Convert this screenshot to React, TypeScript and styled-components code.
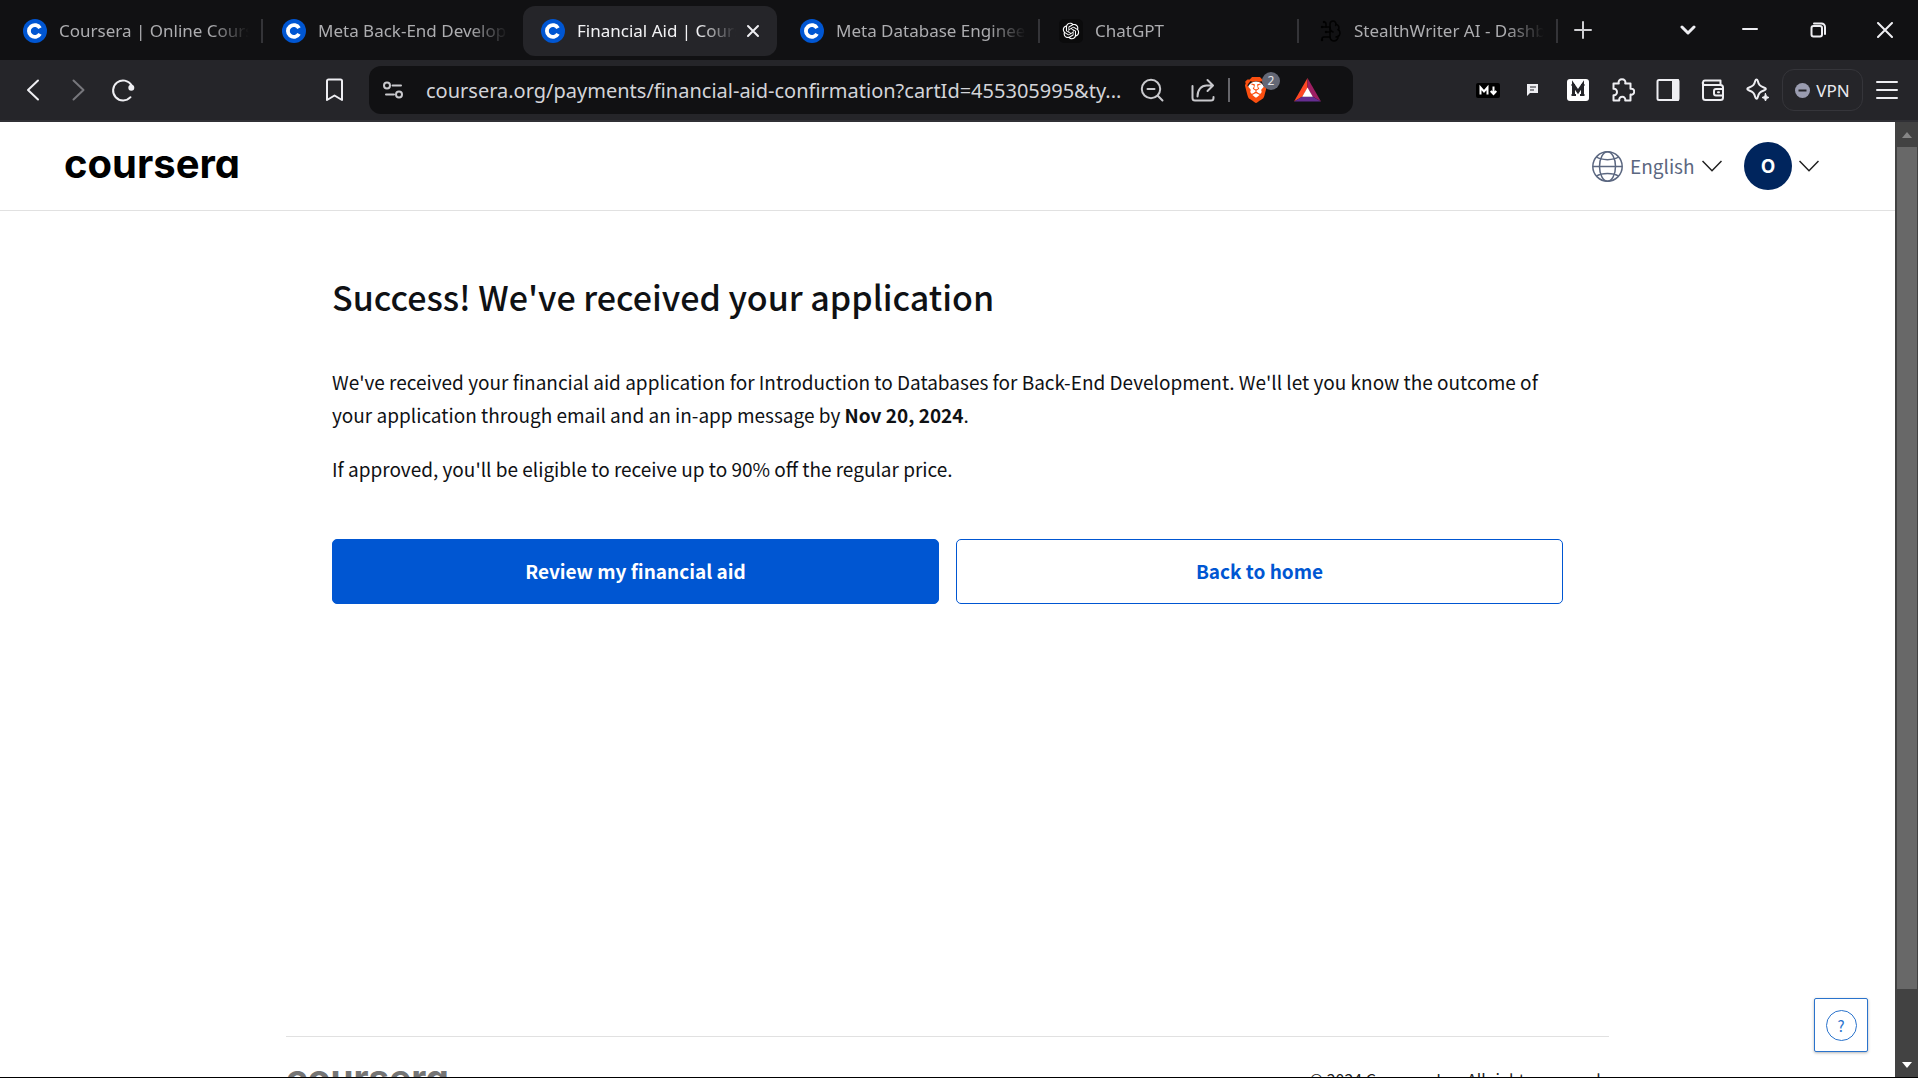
import React from "react";
import styled, { createGlobalStyle } from "styled-components";
import { BrainCircuit } from "lucide-react";
import { SiBrave } from "react-icons/si";
import { RiOpenaiFill } from "react-icons/ri";

const uiFont = `"Noto Sans", "Open Sans", sans-serif`;
const pageFont = `"Source Sans Pro", "Noto Sans CJK SC", "Noto Sans", sans-serif`;

const GlobalStyle = createGlobalStyle`
  * { box-sizing: border-box; }
  body { margin: 0; font-family: ${pageFont}; color: #0f1114; background: #fff; }
  button, input, select { font: inherit; color: inherit; margin: 0; }
  button { border: 0; padding: 0; background: none; cursor: pointer; }
  svg { display: block; flex: none; }
`;

const Window = styled.div`
  display: flex;
  flex-direction: column;
  height: 100vh;
  overflow: hidden;
  border-bottom: 1px solid #000;
`;

const TabStrip = styled.header`
  display: flex;
  align-items: center;
  height: 60px;
  flex: none;
  padding-left: 5px;
  background: #111113;
  font-family: ${uiFont};
`;

const TabItem = styled.div<{ $active?: boolean; $divider?: boolean }>`
  position: relative;
  display: flex;
  align-items: center;
  gap: 8px;
  flex: 0 1 254px;
  min-width: 0;
  height: 50px;
  margin: 2px 5px 0 0;
  padding: 0 ${(p) => (p.$active ? 15 : 10)}px 0 18px;
  border-radius: 12px;
  color: ${(p) => (p.$active ? "#f3f3f5" : "#adadb0")};
  background: ${(p) => (p.$active ? "#252529" : "transparent")};

  &::after {
    content: "";
    display: ${(p) => (p.$divider ? "block" : "none")};
    position: absolute;
    right: -4px;
    top: 13px;
    width: 2px;
    height: 24px;
    background: #343438;
  }
`;

const TabButton = styled.button`
  display: flex;
  align-items: center;
  gap: 12px;
  flex: 1;
  min-width: 0;
  height: 100%;
  text-align: left;
`;

const TabTitle = styled.span`
  flex: 1;
  min-width: 0;
  overflow: hidden;
  white-space: nowrap;
  font-size: 17px;
  line-height: 24px;
  mask-image: linear-gradient(to right, #000 calc(100% - 38px), transparent);
`;

const FlippedBrain = styled(BrainCircuit)`
  transform: scaleX(-1);
`;

const IconButton = styled.button<{ $width?: number; $color?: string }>`
  display: flex;
  align-items: center;
  justify-content: center;
  flex: none;
  width: ${(p) => p.$width ?? 45}px;
  height: 45px;
  color: ${(p) => p.$color ?? "#eeeef2"};
`;

const WindowControls = styled.div`
  display: flex;
  margin-left: auto;
`;

const Toolbar = styled.nav`
  display: flex;
  align-items: center;
  flex: none;
  height: 62px;
  padding: 0 9px 0 10px;
  background: #252529;
  border-bottom: 2px solid #303035;
  font-family: ${uiFont};
`;

const BookmarkSlot = styled.div`
  display: flex;
  justify-content: flex-end;
  width: 212px;
  margin-right: 12px;
`;

const AddressBar = styled.div`
  display: flex;
  align-items: center;
  flex: 1;
  min-width: 0;
  height: 48px;
  margin-right: 112px;
  padding: 0 21px 0 1px;
  border-radius: 12px;
  background: #111113;
`;

const AddressInput = styled.input`
  flex: 1;
  min-width: 0;
  height: 40px;
  padding: 0 0 0 11px;
  border: 0;
  outline: 0;
  background: none;
  font-size: 20px;
  color: #d3d4d9;
`;

const Separator = styled.span`
  width: 2px;
  height: 24px;
  background: #66666b;
`;

const ShieldButton = styled(IconButton)`
  position: relative;
`;

const ShieldFace = styled.span`
  display: flex;
  color: #fb4f10;
  background: radial-gradient(circle, #fff 0 8px, transparent 9px);
`;

const ShieldCount = styled.span`
  position: absolute;
  right: 2px;
  top: 4px;
  width: 18px;
  height: 18px;
  border-radius: 9px;
  background: #636775;
  color: #e4e5ea;
  font-size: 12px;
  line-height: 18px;
  text-align: center;
`;

const VpnButton = styled.button`
  display: flex;
  align-items: center;
  justify-content: center;
  gap: 6px;
  width: 81px;
  height: 42px;
  margin: 0 1px 0 2px;
  border: 1px solid #35353a;
  border-radius: 12px;
  color: #e9e9ee;
  font-size: 17px;
`;

const Viewport = styled.div`
  display: flex;
  flex: 1;
  min-height: 0;
`;

const Page = styled.div`
  position: relative;
  display: flex;
  flex-direction: column;
  flex: 1;
  min-width: 0;
  overflow: hidden;
`;

const SiteHeader = styled.header`
  display: flex;
  align-items: center;
  justify-content: space-between;
  flex: none;
  height: 89px;
  padding: 0 76px 0 64px;
  border-bottom: 1px solid #e1e1e1;
`;

const Wordmark = styled.a<{ $muted?: boolean }>`
  padding-bottom: 4px;
  font-family: Inter, sans-serif;
  font-weight: 700;
  font-feature-settings: "cv11";
  font-size: ${(p) => (p.$muted ? 37 : 40)}px;
  line-height: 48px;
  text-decoration: none;
  color: ${(p) => (p.$muted ? "#757575" : "#000")};
`;

const HeaderActions = styled.div`
  display: flex;
  align-items: center;
  gap: 22px;
`;

const LanguageLabel = styled.label`
  display: flex;
  align-items: center;
  gap: 7px;
  color: #5b6780;
`;

const LanguageSelect = styled.select`
  appearance: none;
  border: 0;
  padding: 0;
  background: none;
  font-size: 19px;
  line-height: 30px;
`;

const AccountButton = styled.button`
  display: flex;
  align-items: center;
  gap: 7px;
`;

const Avatar = styled.span`
  width: 48px;
  height: 48px;
  border-radius: 50%;
  background: #00255d;
  color: #fff;
  font-size: 19px;
  font-weight: 700;
  line-height: 46px;
  text-align: center;
`;

const Main = styled.main`
  flex: 1;
  width: 100%;
  max-width: 1231px;
  margin: 0 auto;
  padding-top: 62px;
`;

const Heading = styled.h1`
  margin: 0 0 44px;
  font-size: 34px;
  font-weight: 500;
  line-height: 48px;
`;

const Paragraph = styled.p`
  margin: 0 0 21px;
  font-size: 19px;
  line-height: 33px;
`;

const ButtonRow = styled.div`
  display: grid;
  grid-template-columns: 1fr 1fr;
  gap: 17px;
  margin-top: 54px;
`;

const ActionButton = styled.button<{ $primary?: boolean }>`
  height: 65px;
  padding-bottom: 2px;
  border: 1px solid #0056d2;
  border-radius: 5px;
  background: ${(p) => (p.$primary ? "#0056d2" : "#fff")};
  color: ${(p) => (p.$primary ? "#fff" : "#0056d2")};
  font-size: 19px;
  font-weight: 700;
`;

const SiteFooter = styled.footer`
  display: flex;
  justify-content: space-between;
  align-items: flex-start;
  flex: 0 0 41px;
  width: 100%;
  max-width: 1323px;
  margin: 0 auto;
  padding-top: 17px;
  border-top: 1px solid #e1e1e1;
  overflow: hidden;
`;

const Copyright = styled.p`
  margin: 13px 4px 0 0;
  font-size: 16px;
  line-height: 24px;
  color: #1f1f1f;
`;

const HelpButton = styled.button`
  position: absolute;
  right: 27px;
  bottom: 25px;
  display: flex;
  align-items: center;
  justify-content: center;
  width: 54px;
  height: 54px;
  border: 1px solid #2a73cc;
  border-radius: 2px;
  background: #fff;
  box-shadow: 0 1px 3px rgba(0, 0, 0, 0.3);
`;

const HelpMark = styled.span`
  width: 31px;
  height: 31px;
  border: 1px solid #2a73cc;
  border-radius: 50%;
  color: #2a73cc;
  font-size: 15px;
  line-height: 29px;
`;

const ScrollTrack = styled.div`
  display: flex;
  flex-direction: column;
  align-items: center;
  width: 23px;
  flex: none;
  background: #424242;
`;

const ScrollArrow = styled.span<{ $down?: boolean }>`
  display: flex;
  align-items: center;
  height: 25px;
  color: ${(p) => (p.$down ? "#fff" : "#868686")};
`;

const ScrollThumb = styled.span`
  width: 20px;
  flex: 842;
  background: #686868;
`;

const ScrollRest = styled.span`
  flex: 63;
`;

const CourseraIcon = () => (
  <svg width="24" height="24" viewBox="0 0 24 24" fill="none">
    <circle cx="12" cy="12" r="12" fill="#0056d2" />
    <path d="M17 9.200a5.900 5.900 0 1 0 0 5.600" stroke="#fff" strokeWidth="3.800" />
  </svg>
);

const GptIcon = () => (
  <svg width="24" height="24" viewBox="0 0 24 24">
    <rect width="24" height="24" rx="5" fill="#0b0b0c" />
    <RiOpenaiFill x="2" y="2" size={20} color="#fff" />
  </svg>
);

const Chevron = () => (
  <svg width="20" height="12" viewBox="0 0 20 12" fill="none" stroke="#1f1f1f" strokeWidth="1.5">
    <path d="M.5 1 10 10.700 19.500 1" />
  </svg>
);

type LineIconProps = { children: React.ReactNode; size?: number; width?: number };
const LineIcon = ({ children, size = 24, width = 2 }: LineIconProps) => (
  <svg width={size} height={size} viewBox={`0 0 ${size} ${size}`} fill="none" stroke="currentColor" strokeWidth={width} strokeLinecap="round" strokeLinejoin="round">
    {children}
  </svg>
);

const tabs = [
  { title: "Coursera | Online Courses", icon: <CourseraIcon />, divider: true },
  { title: "Meta Back-End Developer", icon: <CourseraIcon /> },
  { title: "Financial Aid | Coursera", icon: <CourseraIcon />, active: true },
  { title: "Meta Database Engineer", icon: <CourseraIcon />, divider: true },
  { title: "ChatGPT", icon: <GptIcon />, divider: true },
  { title: "StealthWriter AI - Dashboard", icon: <FlippedBrain size={24} color="#020202" strokeWidth={1.5} />, divider: true },
];

const BrowserTabs = () => (
  <TabStrip>
    {tabs.map((tab) => (
      <TabItem key={tab.title} $active={tab.active} $divider={tab.divider}>
        <TabButton>
          {tab.icon}
          <TabTitle>{tab.title}</TabTitle>
        </TabButton>
        {tab.active && (
          <IconButton $width={18} aria-label="Close tab">
            <LineIcon size={14}><path d="M2 2l10 10M12 2 2 12" /></LineIcon>
          </IconButton>
        )}
      </TabItem>
    ))}
    <IconButton $width={48} $color="#d0d0d3" aria-label="New tab">
      <LineIcon size={18}><path d="M9 1v16M1 9h16" /></LineIcon>
    </IconButton>
    <WindowControls>
      <IconButton $width={56} aria-label="Search tabs">
        <LineIcon size={16} width={3}><path d="M2 5l6 6 6-6" /></LineIcon>
      </IconButton>
      <IconButton $width={68} aria-label="Minimize">
        <LineIcon size={16}><path d="M1 7h14" /></LineIcon>
      </IconButton>
      <IconButton $width={68} aria-label="Restore">
        <LineIcon size={16}>
          <rect x="1.500" y="4" width="10.500" height="10.500" rx="2" />
          <path d="M4 1.500h7.500a3.500 3.500 0 0 1 3.500 3.500V12" />
        </LineIcon>
      </IconButton>
      <IconButton $width={66} aria-label="Close window">
        <LineIcon size={16}><path d="M1 1l14 14M15 1 1 15" /></LineIcon>
      </IconButton>
    </WindowControls>
  </TabStrip>
);

const BrowserToolbar = () => (
  <Toolbar>
    <IconButton aria-label="Back"><LineIcon><path d="M17 2.500 7 12l10 9.500" /></LineIcon></IconButton>
    <IconButton aria-label="Forward" $color="#77777c"><LineIcon><path d="M7.500 2.500 17.500 12l-10 9.500" /></LineIcon></IconButton>
    <IconButton aria-label="Reload">
      <LineIcon>
        <path d="M19.500 19.200A10 10 0 1 1 20.600 7.200" />
        <circle cx="20.300" cy="9.700" r="2" fill="currentColor" />
      </LineIcon>
    </IconButton>
    <BookmarkSlot>
      <IconButton aria-label="Bookmark">
        <LineIcon><path d="M4 3a1.500 1.500 0 0 1 1.500-1.500h12A1.500 1.500 0 0 1 19 3v19l-7.500-4.500L4 22z" /></LineIcon>
      </IconButton>
    </BookmarkSlot>
    <AddressBar>
      <IconButton aria-label="Site settings" $color="#c9c9cd">
        <LineIcon><circle cx="6" cy="7.500" r="3" /><path d="M11.500 7.500H20M5 16.500h8" /><circle cx="18" cy="16.500" r="3" /></LineIcon>
      </IconButton>
      <AddressInput aria-label="Address" defaultValue="coursera.org/payments/financial-aid-confirmation?cartId=455305995&ty..." />
      <IconButton aria-label="Zoom" $width={51} $color="#c9c9cd">
        <LineIcon><circle cx="11" cy="11" r="9.200" /><path d="M7.500 11h7M17.800 17.800 22.500 22.500" /></LineIcon>
      </IconButton>
      <IconButton aria-label="Share" $width={51} $color="#c9c9cd">
        <LineIcon><path d="M1.500 8v12a2.500 2.500 0 0 0 2.500 2.500h16a2.500 2.500 0 0 0 2.500-2.500v-1M6.500 18.500c0-7 4-11 9-11h6M16.500 2l5.500 5.500-5.500 5.500" /></LineIcon>
      </IconButton>
      <Separator />
      <ShieldButton $width={52} aria-label="Brave Shields">
        <ShieldFace><SiBrave size={26} /></ShieldFace>
        <ShieldCount>2</ShieldCount>
      </ShieldButton>
      <IconButton $width={50} aria-label="Rewards">
        <svg width="27" height="24" viewBox="0 0 27 24">
          <path d="M13.500 0 0 23.500l8.500-5 5-8.500z" fill="#ff4724" />
          <path d="M13.500 0 27 23.500l-8.500-5-5-8.500z" fill="#9e1f63" />
          <path d="M0 23.500h27l-8.500-5h-10z" fill="#662d91" />
          <path d="M13.500 9.500 8.200 18.700h10.600z" fill="#fff" />
        </svg>
      </IconButton>
    </AddressBar>
    <IconButton aria-label="Markdown">
      <svg width="24" height="15" viewBox="0 0 24 15" fill="none">
        <rect width="24" height="15" rx="2" fill="#000" />
        <path d="M4.500 11.500V4.500l3.500 4 3.500-4v7M17.500 3.500v7M14.700 8l2.800 3 2.800-3" stroke="#fff" strokeWidth="2" />
      </svg>
    </IconButton>
    <IconButton aria-label="Comments">
      <svg width="12" height="12" viewBox="0 0 12 12">
        <path d="M0 0h11v9H3l-3 3z" fill="#eeeef2" />
        <path d="M3 3h6M3 6h4" stroke="#252529" strokeWidth="1.200" />
      </svg>
    </IconButton>
    <IconButton aria-label="M extension">
      <svg width="22" height="22" viewBox="0 0 22 22" fill="none">
        <rect width="22" height="22" rx="3" fill="#fff" />
        <path d="M4.500 6H8M14 6h3.500M4.500 16H9M13 16h4.500" stroke="#252529" strokeWidth="2" />
        <path d="M6.500 16V6l4.500 6.500L15.500 6v10" stroke="#252529" strokeWidth="3" />
      </svg>
    </IconButton>
    <IconButton aria-label="Extensions">
      <LineIcon><path d="M2.500 5.500h5.300C7 2.800 8.800 1.300 11 1.300s4 1.500 3.200 4.200h5.300v5.300c2.300-.5 3.700 1 3.700 2.900s-1.400 3.400-3.700 2.900v5.900h-5.300c.5-2.300-1-3.700-2.900-3.700s-3.500 1.400-3 3.700H2.500v-5.300C4.500 17.700 6 16 6 14s-1.500-3.500-3.500-3.200z" /></LineIcon>
    </IconButton>
    <IconButton aria-label="Sidebar">
      <LineIcon><rect x="1.500" y="2" width="21" height="20" rx="1.500" /><path d="M17 2h5v20h-5z" fill="currentColor" /></LineIcon>
    </IconButton>
    <IconButton aria-label="Wallet">
      <LineIcon><path d="M2 4v15.500A2.500 2.500 0 0 0 4.500 22h15a2.500 2.500 0 0 0 2.500-2.500v-10A2.500 2.500 0 0 0 19.500 7H4a2 2 0 0 1-2-3 2 2 0 0 1 2-1.500h15.500V7M22 11h-7a2 2 0 0 0-2 2v2.500a2 2 0 0 0 2 2h7M17 14.200h1" /></LineIcon>
    </IconButton>
    <IconButton aria-label="Leo AI">
      <LineIcon>
        <path d="M10.500 1.500c.8 0 1 .5 1.300 1.500 1 4 2 5 6 6.500 2.800 1 2.800 2 0 3-4 1.500-5 2.500-6 6.500-.5 2.300-2 2.300-2.600 0-1-4-2-5-6-6.500-2.600-1-2.600-2 0-3 4-1.500 5-2.500 6-6.500.3-1 .6-1.500 1.300-1.500z" />
        <path d="m19.500 15.500 1 3 2.500 1-2.500 1-1 2.500-1-2.500-2.500-1 2.500-1z" fill="currentColor" strokeWidth="1" />
      </LineIcon>
    </IconButton>
    <VpnButton>
      <svg width="15" height="15" viewBox="0 0 15 15"><circle cx="7.500" cy="7.500" r="7.500" fill="#9a9cb0" /><path d="M3.500 7.500h8" stroke="#252529" strokeWidth="2" /></svg>
      VPN
    </VpnButton>
    <IconButton aria-label="Menu"><LineIcon><path d="M2 4h20M2 12h20M2 20h20" /></LineIcon></IconButton>
  </Toolbar>
);

export default function App() {
  return (
    <Window>
      <GlobalStyle />
      <BrowserTabs />
      <BrowserToolbar />
      <Viewport>
        <Page>
          <SiteHeader>
            <Wordmark href="#">coursera</Wordmark>
            <HeaderActions>
              <LanguageLabel>
                <svg width="31" height="31" viewBox="0 0 31 31" fill="none" stroke="#5b6780" strokeWidth="1.500">
                  <circle cx="15.500" cy="15.500" r="14.700" />
                  <ellipse cx="15.500" cy="15.500" rx="8" ry="14.700" />
                  <path d="M1 15.500h29M4.500 6c5 3.500 17 3.500 22 0M4.500 25c5-3.500 17-3.500 22 0" />
                </svg>
                <LanguageSelect aria-label="Language"><option>English</option></LanguageSelect>
                <Chevron />
              </LanguageLabel>
              <AccountButton aria-label="Account menu"><Avatar>O</Avatar><Chevron /></AccountButton>
            </HeaderActions>
          </SiteHeader>
          <Main>
            <Heading>Success! We've received your application</Heading>
            <Paragraph>
              We've received your financial aid application for Introduction to Databases for Back-End Development. We'll let you know the outcome of your application through email and an in-app message by <strong>Nov 20, 2024</strong>.
            </Paragraph>
            <Paragraph>If approved, you'll be eligible to receive up to 90% off the regular price.</Paragraph>
            <ButtonRow>
              <ActionButton $primary>Review my financial aid</ActionButton>
              <ActionButton>Back to home</ActionButton>
            </ButtonRow>
          </Main>
          <SiteFooter>
            <Wordmark href="#" $muted>coursera</Wordmark>
            <Copyright>© 2024 Coursera Inc. All rights reserved.</Copyright>
          </SiteFooter>
          <HelpButton aria-label="Help"><HelpMark>?</HelpMark></HelpButton>
        </Page>
        <ScrollTrack>
          <ScrollArrow><svg width="10" height="6" viewBox="0 0 10 6"><path d="M0 6h10L5 0z" fill="currentColor" /></svg></ScrollArrow>
          <ScrollThumb />
          <ScrollRest />
          <ScrollArrow $down><svg width="10" height="6" viewBox="0 0 10 6"><path d="M0 0h10L5 6z" fill="currentColor" /></svg></ScrollArrow>
        </ScrollTrack>
      </Viewport>
    </Window>
  );
}
